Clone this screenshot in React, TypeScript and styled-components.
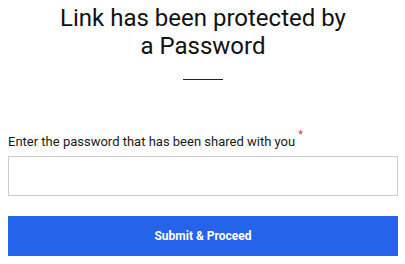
import React, { useState } from 'react';
import styled, { createGlobalStyle } from 'styled-components';

const GlobalStyle = createGlobalStyle`
	html, body {
		margin: 0;
		padding: 0;
		background: #ffffff;
	}
	body {
		font-family: Roboto, 'Liberation Sans', Arial, sans-serif;
		color: #111111;
	}
`;

const Page = styled.div`
	width: 390px;
	padding: 4px 8px 0;
	display: flex;
	flex-direction: column;
	align-items: center;
`;

const Title = styled.h1`
	margin: 0;
	max-width: 296px;
	font-size: 24px;
	line-height: 28px;
	font-weight: 400;
	text-align: center;
	color: #111111;
`;

const Divider = styled.hr`
	width: 40px;
	height: 1px;
	margin: 19px 0 0;
	border: none;
	background: #222222;
`;

const Form = styled.form`
	align-self: stretch;
	display: flex;
	flex-direction: column;
	margin-top: 52px;
`;

const Label = styled.label`
	font-size: 13px;
	line-height: 20px;
	color: #1a1a1a;
`;

const Required = styled.sup`
	color: #e8343f;
	font-size: 11px;
	line-height: 0;
	margin-left: 3px;
	vertical-align: 8px;
`;

const PasswordInput = styled.input`
	box-sizing: border-box;
	margin-top: 4px;
	height: 40px;
	width: 100%;
	padding: 0 10px;
	border: 1px solid #cccccc;
	border-radius: 0;
	font-size: 14px;
	outline: none;
	&:focus {
		border-color: #2563eb;
	}
`;

const SubmitButton = styled.button`
	margin-top: 20px;
	height: 40px;
	width: 100%;
	border: none;
	border-radius: 0;
	background: #2563eb;
	color: #ffffff;
	font-family: Roboto, 'Liberation Sans', Arial, sans-serif;
	font-size: 12px;
	font-weight: 700;
	cursor: pointer;
`;

function App() {
	const [password, setPassword] = useState('');

	const submitHandler = (e: React.FormEvent) => {
		e.preventDefault();
	};

	return (
		<>
			<GlobalStyle />
			<Page>
				<Title>Link has been protected by a Password</Title>
				<Divider />
				<Form onSubmit={submitHandler}>
					<Label htmlFor="password">
						Enter the password that has been shared with you
						<Required>*</Required>
					</Label>
					<PasswordInput
						id="password"
						type="password"
						value={password}
						onChange={(e) => setPassword(e.target.value)}
					/>
					<SubmitButton type="submit">Submit &amp; Proceed</SubmitButton>
				</Form>
			</Page>
		</>
	);
}

export default App;
